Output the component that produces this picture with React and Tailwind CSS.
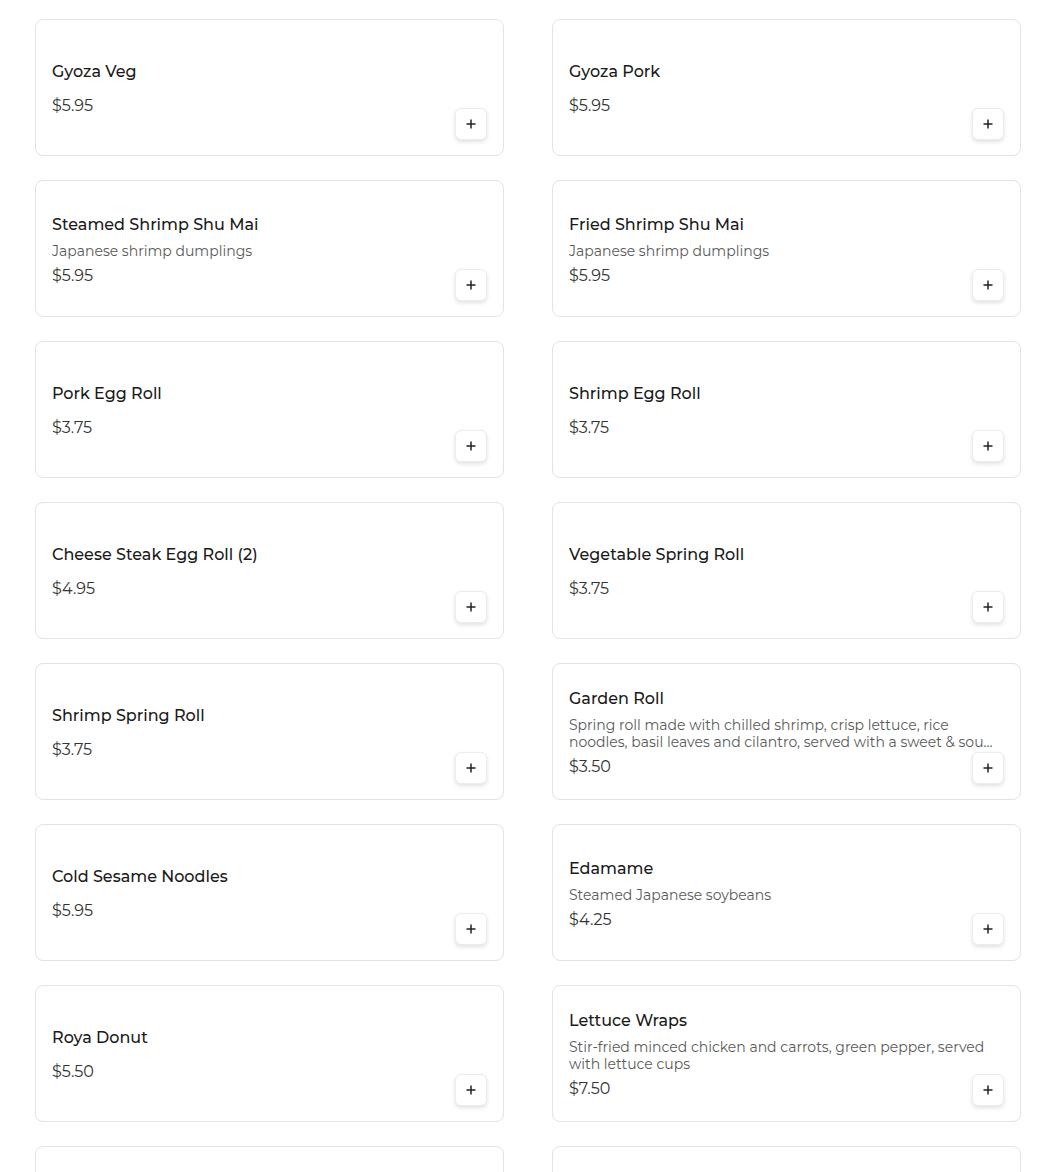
import React from 'react';

const items = [
    { name: 'Gyoza Veg', price: '$5.95' },
    { name: 'Gyoza Pork', price: '$5.95' },
    { name: 'Steamed Shrimp Shu Mai', description: 'Japanese shrimp dumplings', price: '$5.95' },
    { name: 'Fried Shrimp Shu Mai', description: 'Japanese shrimp dumplings', price: '$5.95' },
    { name: 'Pork Egg Roll', price: '$3.75' },
    { name: 'Shrimp Egg Roll', price: '$3.75' },
    { name: 'Cheese Steak Egg Roll (2)', price: '$4.95' },
    { name: 'Vegetable Spring Roll', price: '$3.75' },
    { name: 'Shrimp Spring Roll', price: '$3.75' },
    {
        name: 'Garden Roll',
        description: 'Spring roll made with chilled shrimp, crisp lettuce, rice noodles, basil leaves and cilantro, served with a sweet & sour peanut sauce',
        price: '$3.50',
    },
    { name: 'Cold Sesame Noodles', price: '$5.95' },
    { name: 'Edamame', description: 'Steamed Japanese soybeans', price: '$4.25' },
    { name: 'Roya Donut', price: '$5.50' },
    {
        name: 'Lettuce Wraps',
        description: 'Stir-fried minced chicken and carrots, green pepper, served with lettuce cups',
        price: '$7.50',
    },
    { name: 'Crab Rangoon', price: '$5.95' },
    { name: 'Chicken Satay', price: '$6.50' },
];

function PlusIcon() {
    return (
        <svg width="10" height="10" viewBox="0 0 10 10" fill="none" stroke="#222" strokeWidth="1.5">
            <path d="M5 0.5v9M0.5 5h9" />
        </svg>
    );
}

function MenuCard({ item }) {
    return (
        <div className="relative h-[137px] rounded-lg border border-[#e3e3e3] bg-white px-4 pt-[3px] flex flex-col justify-center">
            <p className="text-[16px] leading-[24px] font-medium text-[#1a1a1a] truncate">{item.name}</p>
            {item.description ? (
                <p className="mt-[6px] mb-[4px] pr-[8px] text-[14px] leading-[17px] text-[#5a5a5a] line-clamp-2">{item.description}</p>
            ) : (
                <div className="h-[10px]" />
            )}
            <p className="text-[16px] leading-[24px] text-[#333]">{item.price}</p>
            <button
                type="button"
                className="absolute right-[16px] bottom-[15px] w-8 h-8 flex items-center justify-center rounded-md border border-[#ececec] bg-white shadow-[0_2px_4px_rgba(0,0,0,0.12)]"
            >
                <PlusIcon />
            </button>
        </div>
    );
}

export default function App() {
    return (
        <div className="min-h-screen bg-white font-['Montserrat','Open_Sans',sans-serif]">
            <div className="pl-[35px] pt-[19px] pb-10 grid grid-cols-[469px_469px] gap-x-[48px] gap-y-[24px]">
                {items.map((item, index) => (
                    <MenuCard key={index} item={item} />
                ))}
            </div>
        </div>
    );
}
